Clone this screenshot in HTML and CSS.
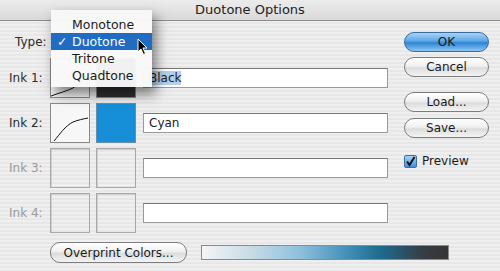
FILE: index.html
```html
<!DOCTYPE html>
<html lang="en">
<head>
    <meta charset="UTF-8">
    <title>Duotone Options</title>
    <link rel="stylesheet" href="styles.css">
</head>
<body>

    <div class="dialog">
        <div class="titlebar">Duotone Options</div>

        <div class="content">
            <div class="main">
                <!-- Type -->
                <div class="type-row">
                    <span class="label">Type:</span>
                </div>

                <!-- Inks -->
                <div class="ink-row">
                    <span class="label">Ink 1:</span>
                    <div class="curve-box">
                        <svg width="38" height="38" viewBox="0 0 38 38">
                            <path d="M0 37 C8 34 16 32 22 29 C28 25 32 20 37 16" fill="none" stroke="#111" stroke-width="1"/>
                        </svg>
                    </div>
                    <div class="color-box black"></div>
                    <div class="field"><span class="selected">Black</span></div>
                </div>
                <div class="ink-row">
                    <span class="label">Ink 2:</span>
                    <div class="curve-box">
                        <svg width="38" height="38" viewBox="0 0 38 38">
                            <path d="M3 37 C9 30 14 22 22 18 C27 16 32 15 37 14" fill="none" stroke="#111" stroke-width="1"/>
                        </svg>
                    </div>
                    <div class="color-box cyan"></div>
                    <div class="field">Cyan</div>
                </div>
                <div class="ink-row disabled">
                    <span class="label">Ink 3:</span>
                    <div class="curve-box"></div>
                    <div class="color-box"></div>
                    <div class="field"></div>
                </div>
                <div class="ink-row disabled">
                    <span class="label">Ink 4:</span>
                    <div class="curve-box"></div>
                    <div class="color-box"></div>
                    <div class="field"></div>
                </div>
            </div>

            <div class="side">
                <button class="btn default ok">OK</button>
                <button class="btn cancel">Cancel</button>
                <button class="btn load">Load...</button>
                <button class="btn save">Save...</button>
                <label class="preview">
                    <span class="checkbox">
                        <svg width="11" height="11" viewBox="0 0 11 11">
                            <path d="M2 5.5 L4.5 9 L9.5 1" fill="none" stroke="#111" stroke-width="2"/>
                        </svg>
                    </span>
                    Preview
                </label>
            </div>
        </div>

        <div class="bottom-row">
            <button class="btn overprint">Overprint Colors...</button>
            <div class="ramp"></div>
        </div>

        <!-- Menu aberto do Type -->
        <div class="menu">
            <div class="menu-item">Monotone</div>
            <div class="menu-item active"><span class="check">✓</span>Duotone</div>
            <div class="menu-item">Tritone</div>
            <div class="menu-item">Quadtone</div>
        </div>

        <svg class="cursor" width="11" height="18" viewBox="0 0 11 18">
            <path d="M1 1 L1 14 L4 11 L6.5 16.5 L8.5 15.5 L6 10 L10 10 Z" fill="#000" stroke="#fff" stroke-width="1"/>
        </svg>
    </div>

</body>
</html>
```

FILE: styles.css
```css
body {
    margin: 0;
    padding: 0;
    font-family: "DejaVu Sans", "Liberation Sans", sans-serif;
    font-size: 12px;
    color: #1a1a1a;
}
.dialog {
    position: relative;
    width: 500px;
    height: 271px;
    overflow: hidden;
    background: repeating-linear-gradient(180deg, #efefef 0, #efefef 2px, #e7e7e7 2px, #e7e7e7 4px);
}
.titlebar {
    height: 20px;
    line-height: 20px;
    text-align: center;
    font-size: 13px;
    color: #222;
    background: linear-gradient(180deg, #ececec, #d9d9d9);
    border-bottom: 1px solid #8c8c8c;
}
.content {
    display: flex;
    padding-left: 9px;
}
.main {
    display: flex;
    flex-direction: column;
    gap: 5px;
}
.label {
    width: 41px;
    color: #2a2a2a;
}
.type-row {
    display: flex;
    align-items: center;
    height: 20px;
    margin-top: 11px;
    margin-bottom: 1px;
    padding-left: 6px;
}
.ink-row {
    display: flex;
    align-items: center;
    height: 40px;
}
.curve-box, .color-box {
    box-sizing: border-box;
    width: 40px;
    height: 40px;
    border: 1px solid #8a8a8a;
}
.curve-box {
    background: #f7f7f7;
}
.curve-box svg {
    display: block;
    margin: 0;
}
.color-box {
    margin-left: 6px;
}
.color-box.black {
    background: #2f2f2f;
}
.color-box.cyan {
    background: #168fd8;
    border-color: #6a8ea8;
}
.field {
    box-sizing: border-box;
    width: 245px;
    height: 20px;
    margin-left: 7px;
    padding-left: 5px;
    line-height: 18px;
    background: #fff;
    border: 1px solid #999;
    border-top-color: #777;
}
.selected {
    background: #b5d0ec;
}
.ink-row.disabled .label {
    color: #9a9a9a;
}
.ink-row.disabled .curve-box, .ink-row.disabled .color-box {
    background: transparent;
    border-color: #a8a8a8;
    box-shadow: inset 1px 1px 0 #d0d0d0;
}
.side {
    display: flex;
    flex-direction: column;
    margin-left: 16px;
    width: 85px;
}
.btn {
    box-sizing: border-box;
    height: 20px;
    padding: 0;
    font-family: inherit;
    font-size: 12px;
    color: #1a1a1a;
    border: 1px solid #7c7c7c;
    border-radius: 10px;
    background: linear-gradient(180deg, #ffffff 0%, #f0f0f0 45%, #dcdcdc 55%, #f4f4f4 100%);
}
.btn.ok {
    margin-top: 11px;
    border-color: #3b6a9c;
    background: linear-gradient(180deg, #a9d3f5 0%, #5aa6e6 45%, #2f84d4 55%, #8cc8f5 100%);
}
.btn.cancel {
    margin-top: 5px;
}
.btn.load {
    margin-top: 15px;
}
.btn.save {
    margin-top: 6px;
}
.preview {
    display: flex;
    align-items: center;
    gap: 5px;
    margin-top: 16px;
    font-size: 12px;
}
.checkbox {
    box-sizing: border-box;
    display: flex;
    align-items: center;
    justify-content: center;
    width: 13px;
    height: 13px;
    border: 1px solid #3d6e9e;
    border-radius: 2px;
    background: linear-gradient(180deg, #a6d2f4, #3f92dc);
}
.bottom-row {
    display: flex;
    align-items: center;
    margin-top: 9px;
    padding-left: 50px;
}
.btn.overprint {
    width: 137px;
    height: 21px;
}
.ramp {
    box-sizing: border-box;
    width: 248px;
    height: 15px;
    margin-left: 14px;
    border: 1px solid #8a8a8a;
    background: linear-gradient(90deg, #f3f5f7 0%, #c7dbe6 20%, #8ec0dd 40%, #3f8cb5 60%, #1e6d90 72%, #363c43 90%, #353535 100%);
}
.menu {
    position: absolute;
    left: 51px;
    top: 10px;
    width: 101px;
    padding: 6px 0 3px;
    background: rgba(248, 248, 248, 0.97);
    box-shadow: 4px 7px 12px rgba(0, 0, 0, 0.5);
}
.menu-item {
    position: relative;
    height: 17px;
    line-height: 17px;
    padding-left: 21px;
    font-size: 12.5px;
    color: #1a1a1a;
}
.menu-item.active {
    background: #1f6cc2;
    color: #fff;
}
.check {
    position: absolute;
    left: 6px;
}
.cursor {
    position: absolute;
    left: 137px;
    top: 38px;
}
```
